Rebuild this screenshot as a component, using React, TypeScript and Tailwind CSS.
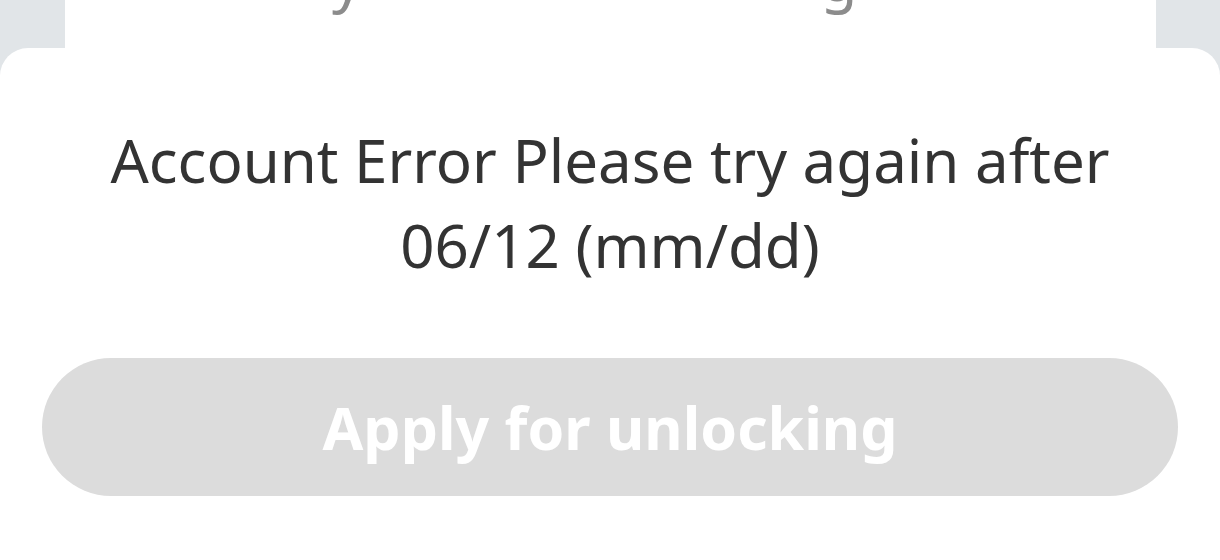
export default function App() {
  return (
    <div className="w-[1220px] h-[560px] bg-[#e1e5e8] overflow-hidden flex flex-col" style={{ fontFamily: '"Noto Sans", "Open Sans", sans-serif' }}>
      <div className="h-[48px] mx-[65px] w-[1091px] bg-white overflow-hidden relative shrink-0">
        <div className="absolute left-[267px] bottom-[40px] flex text-[60px] leading-[60px] text-[#8c8c8c]">
          <span>y</span>
          <span className="ml-[458px]">g</span>
        </div>
      </div>
      <div className="flex-1 bg-white rounded-t-[28px] flex flex-col items-center">
        <p className="mt-[70px] w-[1080px] text-center text-[60px] leading-[85px] text-[#333333]">
          Account Error Please try again after 06/12 (mm/dd)
        </p>
        <button className="mt-[70px] w-[1136px] h-[138px] rounded-full bg-[#dcdcdc] text-white text-[59px] font-bold flex items-center justify-center">
          Apply for unlocking
        </button>
      </div>
    </div>
  );
}
